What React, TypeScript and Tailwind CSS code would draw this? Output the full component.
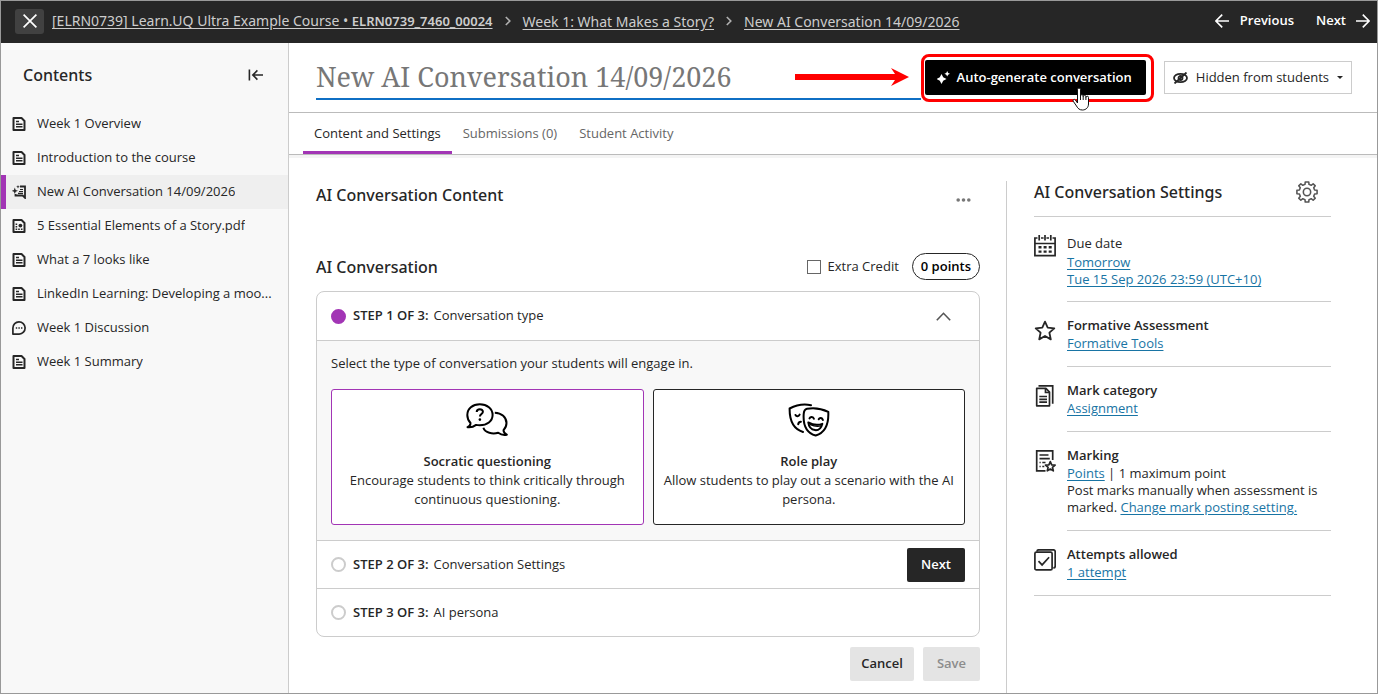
import { useState, type ReactNode } from 'react';

type IconProps = { className?: string };

const PageIcon = ({ className = 'size-[14px]' }: IconProps) => (
  <svg viewBox="0 0 14 14" fill="none" stroke="currentColor" className={className} aria-hidden="true">
    <path d="M1.500 1h8l3 3v9h-11z" strokeWidth="2" strokeLinejoin="round" />
    <path d="M4 4.500h3M4 7.200h6.500M4 9.800h6.500" strokeWidth="1.500" />
  </svg>
);

const PdfIcon = ({ className = 'size-[14px]' }: IconProps) => (
  <svg viewBox="0 0 14 14" fill="none" stroke="currentColor" className={className} aria-hidden="true">
    <path d="M1.500 1h8l3 3v9h-11z" strokeWidth="2" strokeLinejoin="round" />
    <path d="M3.600 5.200h1.600M3.600 7.700h1.600M3.600 10.200h1.600M6.200 10.200h1.600M8.900 10.200h1.600" strokeWidth="1.400" />
    <circle cx="8.400" cy="6.600" r="1.900" fill="currentColor" stroke="none" />
  </svg>
);

const AiIcon = ({ className = 'size-[14px]' }: IconProps) => (
  <svg viewBox="0 0 14 14" fill="none" stroke="currentColor" className={className} aria-hidden="true">
    <path d="M8 1.500h5v11.300l-2.300-2.300H3.500V9" strokeWidth="1.800" />
    <path d="M8 4.500h3M7 6.500h4M6 8.400h5" strokeWidth="1.200" />
    <path d="M2.800 2.600l.9 2.300 2.300.9-2.300.9-.9 2.300-.9-2.300-2.300-.9 2.300-.9z" fill="currentColor" stroke="none" />
    <path d="M6 0l.5 1.300 1.300.5-1.300.5L6 3.600l-.5-1.300-1.300-.5 1.300-.5z" fill="currentColor" stroke="none" />
  </svg>
);

const DiscussionIcon = ({ className = 'size-[14px]' }: IconProps) => (
  <svg viewBox="0 0 14 14" fill="none" stroke="currentColor" className={className} aria-hidden="true">
    <path d="M.9 13.100V7a6.100 6.100 0 1 1 6.300 6.100z" strokeWidth="1.700" strokeLinejoin="round" />
    <path d="M3.800 7h1.400M6.400 7h1.400M9 7h1.400" strokeWidth="1.400" />
  </svg>
);

const MENU = [
  { label: 'Week 1 Overview', Icon: PageIcon },
  { label: 'Introduction to the course', Icon: PageIcon },
  { label: 'New AI Conversation 14/09/2026', Icon: AiIcon },
  { label: '5 Essential Elements of a Story.pdf', Icon: PdfIcon },
  { label: 'What a 7 looks like', Icon: PageIcon },
  { label: 'LinkedIn Learning: Developing a moo...', Icon: PageIcon },
  { label: 'Week 1 Discussion', Icon: DiscussionIcon },
  { label: 'Week 1 Summary', Icon: PageIcon },
];

const TABS = ['Content and Settings', 'Submissions (0)', 'Student Activity'];

function ArrowIcon({ flip = false }: { flip?: boolean }) {
  return (
    <svg viewBox="0 0 14 14" fill="none" stroke="currentColor" strokeWidth="1.600" className={flip ? 'size-[14px] rotate-180' : 'size-[14px]'} aria-hidden="true">
      <path d="M14 7H1M7.200.6L.9 7l6.300 6.400" />
    </svg>
  );
}

function Crumb() {
  return (
    <svg viewBox="0 0 6 10" fill="none" stroke="#b0b0b0" strokeWidth="1.600" className="mx-3 h-[10px] w-[6px] shrink-0" aria-hidden="true">
      <path d="M.8 1l4 4-4 4" />
    </svg>
  );
}

function Heading({ children }: { children: ReactNode }) {
  return <h2 className="font-['Noto_Sans',sans-serif] text-[16px] leading-[22px] font-medium">{children}</h2>;
}

function TopBar() {
  return (
    <header className="flex h-[42px] shrink-0 items-center bg-[#262626] pr-[7px] pb-[2px] pl-[14px] text-[#cdcdcd]">
      <button aria-label="Close" className="flex h-[25px] w-[29px] items-center justify-center rounded-[3px] bg-[#414141] text-white">
        <svg viewBox="0 0 14 14" stroke="currentColor" strokeWidth="1.700" className="size-[14px]">
          <path d="M.6.6l12.800 12.800M13.400.6L.6 13.400" />
        </svg>
      </button>
      <nav aria-label="Breadcrumb" className="ml-2 flex items-center font-['Noto_Sans',sans-serif] text-[14px] whitespace-nowrap">
        <a href="#course" className="underline underline-offset-2">
          [ELRN0739] Learn.UQ Ultra Example Course • <span className="text-[13px] font-semibold">ELRN0739_7460_00024</span>
        </a>
        <Crumb />
        <a href="#week" className="underline underline-offset-2">Week 1: What Makes a Story?</a>
        <Crumb />
        <a href="#item" className="underline underline-offset-2">New AI Conversation 14/09/2026</a>
      </nav>
      <div className="ml-auto flex gap-[22px] text-[13px] font-semibold text-white">
        <button className="flex items-center gap-[11px]">
          <ArrowIcon />
          Previous
        </button>
        <button className="flex items-center gap-[10px]">
          Next
          <ArrowIcon flip />
        </button>
      </div>
    </header>
  );
}

function Sidebar() {
  const [active, setActive] = useState(2);

  return (
    <aside className="w-[288px] shrink-0 border-r border-[#ccc] bg-[#f8f8f8]">
      <div className="flex h-[64px] items-center justify-between pr-6 pl-[22px]">
        <Heading>Contents</Heading>
        <button aria-label="Collapse contents">
          <svg viewBox="0 0 16 12" fill="none" stroke="currentColor" strokeWidth="1.600" className="h-3 w-4">
            <path d="M1.400.5v11M15 6H5M9.400 1.400L4.800 6l4.600 4.600" />
          </svg>
        </button>
      </div>
      <ul>
        {MENU.map(({ label, Icon }, i) => (
          <li key={label}>
            <button
              onClick={() => setActive(i)}
              className={`flex h-[34px] w-full items-center border-l-[5px] pr-[10px] pl-[6px] text-left text-[13px] font-medium ${
                active === i ? 'border-[#a235b5] bg-[#efefef]' : 'border-transparent'
              }`}
            >
              <Icon className="size-[14px] shrink-0" />
              <span className="ml-[11px] truncate">{label}</span>
            </button>
          </li>
        ))}
      </ul>
    </aside>
  );
}

function TitleRow() {
  return (
    <div className="flex h-[70px] items-center border-b border-[#bbb] pr-[25px] pl-[27px]">
      <div className="flex h-[44px] min-w-0 flex-1 items-center border-b-2 border-[#0f6fc4] pr-[12px]">
        <input
          aria-label="Title"
          defaultValue="New AI Conversation 14/09/2026"
          className="min-w-0 flex-1 pt-[2px] font-['Noto_Serif','DejaVu_Serif',serif] text-[27px] text-[#777] outline-none"
        />
        <svg viewBox="0 0 114 18" fill="#f00" className="h-[18px] w-[114px] shrink-0" aria-hidden="true">
          <path d="M0 6h100L96 0l18 9-18 9 4-6H0z" />
        </svg>
      </div>
      <div className="relative mt-px shrink-0 rounded-lg border-3 border-[#f00] bg-white pt-[3px] pr-[5px] pb-1 pl-px">
        <button className="flex h-[35px] items-center rounded-[2px] bg-black pr-[14px] pl-3 text-[13px] font-semibold whitespace-nowrap text-white">
          <svg viewBox="0 0 13 13" fill="currentColor" className="mr-[7px] size-[13px]" aria-hidden="true">
            <path d="M4.500 3l1.700 3.300L9.500 8 6.200 9.700 4.500 13 2.800 9.700-.5 8l3.300-1.700z" />
            <path d="M10.200 0l.9 1.900 1.900.9-1.900.9-.9 1.900-.9-1.900-1.900-.9 1.900-.9z" />
          </svg>
          Auto-generate conversation
        </button>
        <svg viewBox="0 0 18 24" fill="#fff" stroke="#111" className="absolute top-[30px] right-[61px] h-6 w-[18px]" aria-hidden="true">
          <path d="M5.500 16V2.500a1.500 1.500 0 0 1 3 0V9a1.300 1.300 0 0 1 2.700 0v.7a1.300 1.300 0 0 1 2.700 0v.8a1.300 1.300 0 0 1 2.600 0V17c0 3.500-2.600 6-6 6-3 0-4.500-1.300-6-4L1.200 14.200c-.8-1.700 1.200-2.500 2.200-1.200z" />
          <path d="M8.500 9v4M11.200 9.500V13M13.900 10.300V13" />
        </svg>
      </div>
      <button className="ml-[10px] flex h-[33px] shrink-0 items-center border border-[#ccc] px-2 text-[13px] whitespace-nowrap">
        <svg viewBox="0 0 15 12" fill="none" stroke="currentColor" strokeWidth="1.800" className="mr-2 h-3 w-[15px]" aria-hidden="true">
          <ellipse cx="7.500" cy="6" rx="6.500" ry="4.200" />
          <circle cx="7.500" cy="6" r="2" />
          <path d="M1.500 11.500L13.500.5" />
        </svg>
        Hidden from students
        <span className="ml-2 border-x-[3px] border-t-[3px] border-x-transparent border-t-[#262626]" />
      </button>
    </div>
  );
}

function Tabs() {
  const [tab, setTab] = useState(0);

  return (
    <div role="tablist" className="flex h-[42px] border-b border-[#bbb] pl-[14px] text-[13px] font-medium shadow-[0_3px_0_#f4f4f4]">
      {TABS.map((name, i) => (
        <button
          key={name}
          role="tab"
          aria-selected={tab === i}
          onClick={() => setTab(i)}
          className={`border-b-[3px] px-[11px] pt-[3px] whitespace-nowrap ${
            tab === i ? 'border-[#a235b5] text-[#262626]' : 'border-transparent text-[#666]'
          }`}
        >
          {name}
        </button>
      ))}
    </div>
  );
}

const SpeechIcon = () => (
  <svg viewBox="0 0 42 34" fill="none" stroke="#000" strokeWidth="2" strokeLinejoin="round" className="h-[34px] w-[42px]" aria-hidden="true">
    <path d="M1.500 24.200c2.400-.9 3-2.300 3-4.200C2.500 17.800 1.300 15.200 1.300 12 1.300 5.800 6.600 1.300 13.800 1.300S26.600 5.800 26.600 12s-5.600 10.300-12.800 10.300c-1.300 0-2.600-.1-3.700-.4-2.200 1.700-5.300 2.700-8.600 2.300z" />
    <path d="M10.700 9c.1-3.600 6.200-3.500 6.200-.2 0 2.300-3 2.300-3 4.800" />
    <circle cx="13.900" cy="16.600" r="1.300" fill="#000" stroke="none" />
    <path d="M28.800 9.700c6.800.2 11.700 4.700 11.700 10.400 0 3-1.200 5.200-3 7 0 2 .9 3.600 3.300 4.600-3.300.7-6.300-.2-8.600-1.900-5.600 1.500-13.200.2-14.800-5" />
  </svg>
);

const MasksIcon = () => (
  <svg viewBox="0 0 42 34" fill="none" stroke="#000" strokeWidth="2" strokeLinecap="round" strokeLinejoin="round" className="h-[34px] w-[42px]" aria-hidden="true">
    <path d="M23 2.200C15.500.6 8.200 2 1.600 5.500c-.1 10 2 20 13.400 23.500" />
    <path d="M19 5.700c7.400-1.300 14.500-.2 21.300 3.100.6 13-4.200 21.200-12.600 23.700C19.500 30.200 14.800 24 15.700 11c.2-3.500 1-4.800 3.300-5.300z" />
    <path d="M7.500 12c.9 1.700 3.200 1.500 4.100-.4M10.200 21.200c.3-1.600 1.400-2.500 2.700-2.500" />
    <path d="M21.500 15.400c.9-2.100 3.700-1.900 4.400.3M30.700 16.300c1-2 3.500-1.600 4.200.7" />
    <path d="M20.300 19.500c4.300 2.300 9.600 2.900 14 1.400-1.200 4.300-4 6.600-7.300 6.200-3.600-.4-6.200-3.400-6.700-7.600z" />
    <path d="M22.300 21.600c3.600 1.600 7 2 10.600 1.300" strokeWidth="1.400" />
  </svg>
);

interface StepProps {
  n: number;
  title: string;
  done?: boolean;
  children?: ReactNode;
}

function StepHeader({ n, title, done, children }: StepProps) {
  return (
    <div className={`flex items-center px-[14px] text-[13px] ${done ? 'h-12' : 'h-[47px]'}`}>
      <span className={`mr-[7px] size-[15px] shrink-0 rounded-full border-2 ${done ? 'border-[#a235b5] bg-[#a235b5]' : 'border-[#ccc]'}`} />
      <span className="font-semibold">STEP {n} OF 3:</span>
      <span className="ml-[5px]">{title}</span>
      <div className="ml-auto flex">{children}</div>
    </div>
  );
}

interface ChoiceProps {
  title: string;
  text: string;
  selected: boolean;
  onSelect: () => void;
  children: ReactNode;
}

function Choice({ title, text, selected, onSelect, children }: ChoiceProps) {
  return (
    <button
      onClick={onSelect}
      className={`flex h-[136px] flex-1 basis-0 flex-col items-center rounded-[3px] border bg-white px-[6px] pt-[13px] text-[13px] leading-[19px] ${
        selected ? 'border-[#a235b5]' : 'border-[#262626]'
      }`}
    >
      {children}
      <span className="mt-[15px] font-semibold">{title}</span>
      <span>{text}</span>
    </button>
  );
}

function Content() {
  const [kind, setKind] = useState('socratic');

  return (
    <section className="mr-[26px] min-w-0 flex-1">
      <div className="flex h-[28px] items-center justify-between">
        <Heading>AI Conversation Content</Heading>
        <button aria-label="More options" className="mt-[10px] mr-[9px] flex">
          <svg viewBox="0 0 15 4" fill="#777" className="h-1 w-[15px]">
            <circle cx="2.200" cy="2" r="1.800" />
            <circle cx="7.500" cy="2" r="1.800" />
            <circle cx="12.800" cy="2" r="1.800" />
          </svg>
        </button>
      </div>
      <div className="mt-11 flex h-[27px] items-center">
        <Heading>AI Conversation</Heading>
        <label className="ml-auto flex items-center gap-[7px] text-[13px]">
          <input type="checkbox" className="size-[14px] appearance-none border border-[#666] bg-white checked:bg-[#262626]" />
          Extra Credit
        </label>
        <button className="ml-[13px] h-[27px] rounded-full border border-[#262626] px-2 text-[13px] font-semibold text-black">0 points</button>
      </div>

      <div className="mt-[11px] rounded-lg border border-[#ccc]">
        <StepHeader n={1} title="Conversation type" done>
          <button aria-label="Collapse step" className="mr-[14px]">
            <svg viewBox="0 0 15 9" fill="none" stroke="#555" strokeWidth="1.600" className="h-[9px] w-[15px]">
              <path d="M.8 8.200L7.500 1.300l6.700 6.900" />
            </svg>
          </button>
        </StepHeader>
        <div className="border-y border-[#ccc] bg-[#f8f8f8] px-[14px] pt-[13px] pb-[15px]">
          <p className="text-[13px] leading-[19px] font-medium">Select the type of conversation your students will engage in.</p>
          <div className="mt-4 flex gap-[9px]">
            <Choice
              title="Socratic questioning"
              text="Encourage students to think critically through continuous questioning."
              selected={kind === 'socratic'}
              onSelect={() => setKind('socratic')}
            >
              <SpeechIcon />
            </Choice>
            <Choice
              title="Role play"
              text="Allow students to play out a scenario with the AI persona."
              selected={kind === 'role'}
              onSelect={() => setKind('role')}
            >
              <MasksIcon />
            </Choice>
          </div>
        </div>
        <StepHeader n={2} title="Conversation Settings">
          <button className="h-[34px] rounded-[2px] bg-[#262626] px-[14px] font-semibold text-white">Next</button>
        </StepHeader>
        <div className="border-t border-[#ccc]">
          <StepHeader n={3} title="AI persona" />
        </div>
      </div>

      <div className="mt-[10px] flex justify-end gap-[9px] text-[13px] font-semibold">
        <button className="h-[34px] rounded-[2px] bg-[#e4e4e4] px-[11px]">Cancel</button>
        <button disabled className="h-[34px] rounded-[2px] bg-[#e4e4e4] px-[14px] text-[#8c8c8c]">Save</button>
      </div>
    </section>
  );
}

const CalendarIcon = () => (
  <svg viewBox="0 0 22 22" fill="none" stroke="currentColor" strokeWidth="1.700" className="size-[22px]" aria-hidden="true">
    <path d="M3.500 3H.9v17.600h20.200V3h-2.600M7 3h2.600M12.400 3h2.600M.9 8.500h20.200M5.200 0v5.500M11 0v5.500M16.800 0v5.500" />
    <path d="M4.500 12.300h3M9.600 12.300h3M14.700 12.300h3M4.500 16.600h3M9.600 16.600h3M14.700 16.600h3" strokeWidth="2.400" />
  </svg>
);

const StarIcon = () => (
  <svg viewBox="0 0 22 22" fill="none" stroke="currentColor" strokeWidth="1.800" strokeLinejoin="round" className="size-[22px]" aria-hidden="true">
    <path d="M11 1.600l2.700 6 6.600.7-4.900 4.400 1.400 6.700-5.800-3.400-5.800 3.400 1.400-6.700-4.900-4.400 6.600-.7z" />
  </svg>
);

const CategoryIcon = () => (
  <svg viewBox="0 0 22 22" fill="none" stroke="currentColor" strokeWidth="1.700" className="size-[22px]" aria-hidden="true">
    <path d="M2.700 3.300h9.200l3.600 3.800v13.700H2.700z" strokeLinejoin="round" />
    <path d="M11.500 3.500v4h4M5.300 11.500h7.700M5.300 14.300h7.700M5.300 17.100h7.700M4.500.8h14.200v18" />
  </svg>
);

const MarkingIcon = () => (
  <svg viewBox="0 0 22 22" fill="none" stroke="currentColor" strokeWidth="1.700" className="size-[22px]" aria-hidden="true">
    <path d="M18.700 10V.9h-16v20h8.800M5.500 5h9M5.500 8.700h10.300M5.500 12.500h1.200M8.300 12.500h3.200M5.500 16.500h1.200M8.300 16.500h2" />
    <path d="M16.300 11.600l1.400 3.200 3.400.3-2.600 2.300.8 3.400-3-1.800-3 1.800.8-3.400-2.600-2.300 3.400-.3z" strokeLinejoin="round" />
  </svg>
);

const AttemptsIcon = () => (
  <svg viewBox="0 0 22 22" fill="none" stroke="currentColor" strokeWidth="1.700" className="size-[22px]" aria-hidden="true">
    <rect x=".9" y="3.100" width="17.200" height="17.800" rx="1.500" />
    <path d="M3 2.600C3 1.500 3.600.8 4.600.8h14.700c1.200 0 1.900.7 1.900 1.900v14.600c0 1-.7 1.600-1.900 1.600M4.500 12.200l3.600 3.700 7-7.700" />
  </svg>
);

const GearIcon = () => (
  <svg viewBox="0 0 24 24" fill="none" stroke="#555" strokeWidth="1.700" strokeLinejoin="round" className="size-[22px]">
    <path d="M10.100 1h3.800l.3 2.700 2.400 1 2.100-1.700L21 5.300l-1.700 2.100 1 2.400 2.700.3v3.800l-2.700.3-1 2.400 1.700 2.100-2.300 2.300-2.100-1.700-2.400 1-.3 2.700h-3.800l-.3-2.700-2.400-1L5.300 21 3 18.700l1.700-2.100-1-2.400L1 13.900v-3.800l2.700-.3 1-2.400L3 5.300 5.300 3l2.100 1.700 2.400-1z" />
    <circle cx="12" cy="12" r="4" />
  </svg>
);

const Link = ({ children }: { children: ReactNode }) => (
  <a href="#setting" className="text-[#1874a4] underline underline-offset-2">
    {children}
  </a>
);

interface SettingProps {
  icon: ReactNode;
  label: string;
  plain?: boolean;
  last?: boolean;
  children: ReactNode;
}

function Setting({ icon, label, plain, last, children }: SettingProps) {
  return (
    <div className={`flex gap-[11px] ${last ? 'border-b border-[#ccc]' : ''}`}>
      <div className="w-[22px] shrink-0 pt-[18px]">{icon}</div>
      <div className={`flex-1 text-[13px] leading-[17px] ${plain ? 'pt-[18px] pb-[13px]' : 'pt-[15px] pb-[14px]'} ${last ? '' : 'border-b border-[#ccc]'}`}>
        <h3 className={plain ? 'mb-[2px] font-medium' : 'mb-px font-semibold'}>{label}</h3>
        {children}
      </div>
    </div>
  );
}

function Settings() {
  return (
    <aside className="w-[371px] shrink-0 border-l border-[#ccc] pr-[46px] pl-[27px]">
      <div className="flex h-9 items-start justify-between border-b border-[#ccc] pr-[13px]">
        <Heading>AI Conversation Settings</Heading>
        <button aria-label="Open settings">
          <GearIcon />
        </button>
      </div>
      <Setting icon={<CalendarIcon />} label="Due date" plain>
        <p><Link>Tomorrow</Link></p>
        <p><Link>Tue 15 Sep 2026 23:59 (UTC+10)</Link></p>
      </Setting>
      <Setting icon={<StarIcon />} label="Formative Assessment">
        <Link>Formative Tools</Link>
      </Setting>
      <Setting icon={<CategoryIcon />} label="Mark category">
        <Link>Assignment</Link>
      </Setting>
      <Setting icon={<MarkingIcon />} label="Marking">
        <p><Link>Points</Link> | 1 maximum point</p>
        <p>
          Post marks manually when assessment is marked. <Link>Change mark posting setting.</Link>
        </p>
      </Setting>
      <Setting icon={<AttemptsIcon />} label="Attempts allowed" last>
        <Link>1 attempt</Link>
      </Setting>
    </aside>
  );
}

export default function App() {
  return (
    <div className="flex min-h-screen flex-col border border-[#999] bg-white font-['Open_Sans','Noto_Sans',sans-serif] text-[#262626]">
      <TopBar />
      <div className="flex flex-1">
        <Sidebar />
        <main className="flex min-w-0 flex-1 flex-col">
          <TitleRow />
          <Tabs />
          <div className="flex flex-1 pt-[26px] pl-[27px]">
            <Content />
            <Settings />
          </div>
        </main>
      </div>
    </div>
  );
}
